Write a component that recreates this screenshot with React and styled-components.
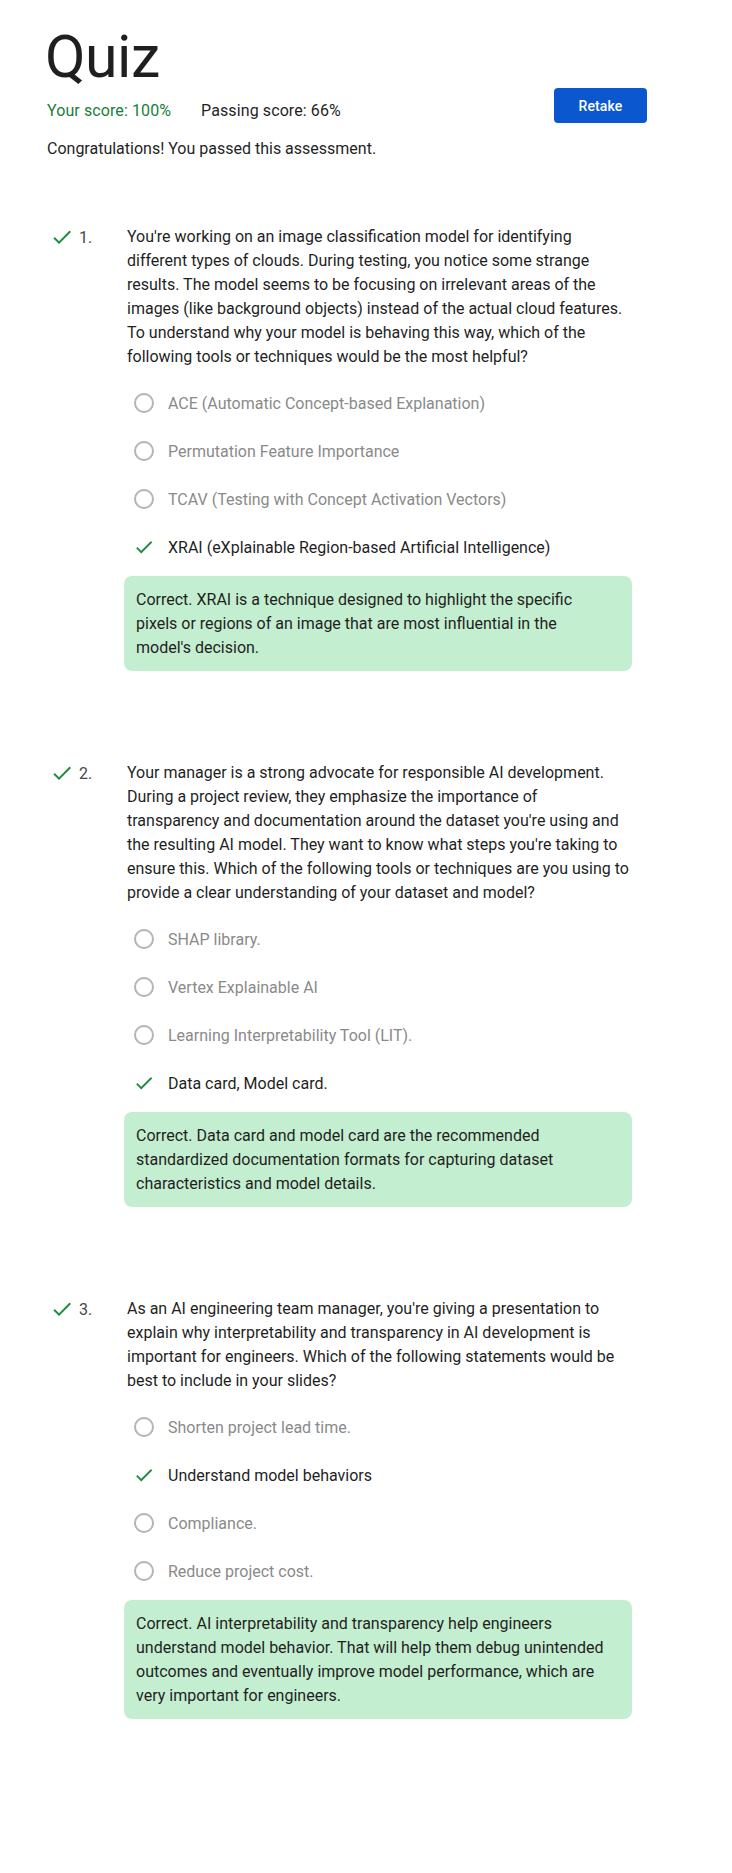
import React from 'react';
import styled, { createGlobalStyle } from 'styled-components';

const GlobalStyle = createGlobalStyle`
  html, body {
    margin: 0;
    padding: 0;
    background: #ffffff;
  }

  body {
    font-family: Roboto, "Liberation Sans", Arial, sans-serif;
    color: #1f1f1f;
    -webkit-font-smoothing: antialiased;
  }
`;

const Page = styled.main`
  width: 647px;
  min-height: 100vh;
  padding: 28px 0 0 47px;
  box-sizing: border-box;
`;

const Title = styled.h1`
  margin: 0 0 0 -2px;
  font-size: 59px;
  line-height: 58px;
  font-weight: 400;
  color: #1f1f1f;
  letter-spacing: -0.5px;
`;

const ScoreRow = styled.div`
  display: flex;
  align-items: flex-end;
  justify-content: space-between;
  margin-top: 2px;
`;

const Scores = styled.div`
  display: flex;
  gap: 30px;
  font-size: 16px;
  line-height: 24px;
  letter-spacing: 0.1px;
`;

const Score = styled.span`
  color: ${({ success }) => (success ? '#188038' : '#1f1f1f')};
`;

const RetakeButton = styled.button`
  height: 35px;
  min-width: 93px;
  padding: 0 24px;
  border: none;
  border-radius: 4px;
  background: #0b57d0;
  color: #ffffff;
  font-family: Roboto, "Liberation Sans", Arial, sans-serif;
  font-size: 14px;
  font-weight: 500;
  letter-spacing: 0.1px;
  cursor: pointer;
`;

const Message = styled.p`
  margin: 14px 0 0;
  font-size: 16px;
  line-height: 24px;
`;

const QuestionList = styled.ol`
  list-style: none;
  margin: 64px 0 0;
  padding: 0;
`;

const QuestionItem = styled.li`
  display: grid;
  grid-template-columns: 77px 508px;

  & + & {
    margin-top: 90px;
  }
`;

const QuestionMarker = styled.div`
  display: flex;
  align-items: center;
  gap: 5px;
  height: 24px;
  padding-left: 3px;
  font-size: 16px;
  color: #444746;
`;

const QuestionBody = styled.div`
  display: flex;
  flex-direction: column;
`;

const QuestionText = styled.p`
  margin: 0;
  padding-left: 3px;
  font-size: 16px;
  line-height: 24px;
  color: #1f1f1f;
`;

const Options = styled.ul`
  list-style: none;
  margin: 10px 0 0;
  padding: 0;
`;

const OptionRow = styled.li`
  display: flex;
  align-items: center;
  gap: 12px;
  height: 48px;
  padding-left: 8px;
  font-size: 16px;
  color: ${({ correct }) => (correct ? '#1f1f1f' : '#8a8a8a')};
`;

const OptionIcon = styled.span`
  display: flex;
  align-items: center;
  justify-content: center;
  width: 24px;
  height: 24px;
`;

const Radio = styled.span`
  width: 20px;
  height: 20px;
  box-sizing: border-box;
  border: 2px solid #b4b4b4;
  border-radius: 50%;
`;

const Feedback = styled.div`
  margin-top: 5px;
  padding: 12px 26px 11px 12px;
  background: #c4eed0;
  border-radius: 8px;
  font-size: 16px;
  line-height: 24px;
  color: #1f1f1f;
`;

const Check = ({ size = 24 }) => (
  <svg width={size} height={size} viewBox="0 0 24 24" aria-hidden="true">
    <path fill="#1e8e3e" d="M9 16.17 4.83 12l-1.42 1.41L9 19 21 7l-1.41-1.41z" />
  </svg>
);

const questions = [
  {
    text:
      "You're working on an image classification model for identifying different types of clouds. During testing, you notice some strange results. The model seems to be focusing on irrelevant areas of the images (like background objects) instead of the actual cloud features. To understand why your model is behaving this way, which of the following tools or techniques would be the most helpful?",
    options: [
      'ACE (Automatic Concept-based Explanation)',
      'Permutation Feature Importance',
      'TCAV (Testing with Concept Activation Vectors)',
      'XRAI (eXplainable Region-based Artificial Intelligence)',
    ],
    answer: 3,
    feedback:
      "Correct. XRAI is a technique designed to highlight the specific pixels or regions of an image that are most influential in the model's decision.",
  },
  {
    text:
      "Your manager is a strong advocate for responsible AI development. During a project review, they emphasize the importance of transparency and documentation around the dataset you're using and the resulting AI model. They want to know what steps you're taking to ensure this. Which of the following tools or techniques are you using to provide a clear understanding of your dataset and model?",
    options: [
      'SHAP library.',
      'Vertex Explainable AI',
      'Learning Interpretability Tool (LIT).',
      'Data card, Model card.',
    ],
    answer: 3,
    feedback:
      'Correct. Data card and model card are the recommended standardized documentation formats for capturing dataset characteristics and model details.',
  },
  {
    text:
      "As an AI engineering team manager, you're giving a presentation to explain why interpretability and transparency in AI development is important for engineers. Which of the following statements would be best to include in your slides?",
    options: [
      'Shorten project lead time.',
      'Understand model behaviors',
      'Compliance.',
      'Reduce project cost.',
    ],
    answer: 1,
    feedback:
      'Correct. AI interpretability and transparency help engineers understand model behavior. That will help them debug unintended outcomes and eventually improve model performance, which are very important for engineers.',
  },
];

const Question = ({ index, text, options, answer, feedback }) => (
  <QuestionItem>
    <QuestionMarker>
      <Check />
      <span>{index + 1}.</span>
    </QuestionMarker>
    <QuestionBody>
      <QuestionText>{text}</QuestionText>
      <Options>
        {options.map((option, i) => (
          <OptionRow key={option} correct={i === answer}>
            <OptionIcon>{i === answer ? <Check size={22} /> : <Radio />}</OptionIcon>
            {option}
          </OptionRow>
        ))}
      </Options>
      <Feedback>{feedback}</Feedback>
    </QuestionBody>
  </QuestionItem>
);

const App = () => (
  <>
    <GlobalStyle />
    <Page>
      <Title>Quiz</Title>
      <ScoreRow>
        <Scores>
          <Score success>Your score: 100%</Score>
          <Score>Passing score: 66%</Score>
        </Scores>
        <RetakeButton type="button">Retake</RetakeButton>
      </ScoreRow>
      <Message>Congratulations! You passed this assessment.</Message>
      <QuestionList>
        {questions.map((q, i) => (
          <Question key={q.text} index={i} {...q} />
        ))}
      </QuestionList>
    </Page>
  </>
);

export default App;
